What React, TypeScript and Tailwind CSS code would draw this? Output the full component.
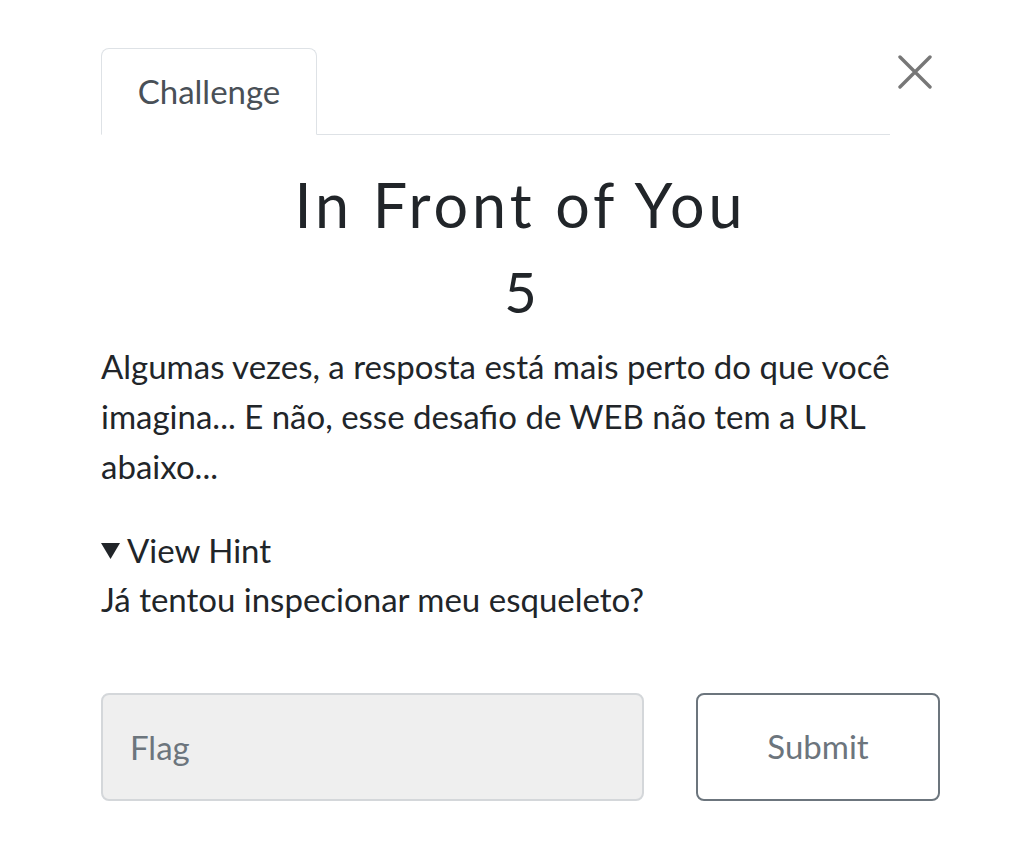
export default function App() {
  return (
    <div
      className="w-[1032px] h-[848px] bg-white text-[#212529] overflow-hidden"
      style={{ fontFamily: 'Lato, "Noto Sans", sans-serif' }}
    >
      <div className="pl-[101px] pr-[92px] pt-[48px]">
        {/* header: tabs + close */}
        <div className="flex items-start">
          <div className="flex-1 flex border-b border-[#dee2e6]">
            <div className="-mb-px h-[87px] w-[216px] flex items-center justify-center border border-[#dee2e6] border-b-white rounded-t-[8px] bg-white text-[33px] text-[#495057]">
              Challenge
            </div>
          </div>
          <button className="ml-[8px] mr-[8px] mt-[7px] w-[34px] h-[34px] flex items-center justify-center text-[#777]">
            <svg width="34" height="34" viewBox="0 0 34 34" fill="none" stroke="currentColor" strokeWidth="3.4" strokeLinecap="round">
              <path d="M2 2L32 32M32 2L2 32" />
            </svg>
          </button>
        </div>

        {/* title */}
        <div className="text-center mt-[34px]">
          <h2 className="text-[61px] leading-[72px] tracking-[4px]">In Front of You</h2>
          <h3 className="text-[56px] leading-[80px] mt-[11px]">5</h3>
        </div>

        <p className="mt-[9px] text-[33px] leading-[50px]">
          Algumas vezes, a resposta está mais perto do que você imagina... E não, esse desafio de WEB não tem a URL abaixo...
        </p>

        <div className="mt-[35px] text-[33px] leading-[49px]">
          <div className="flex items-center">
            <svg width="19" height="16" viewBox="0 0 19 16" className="mr-[7px]">
              <path d="M0 0H19L9.5 16Z" fill="currentColor" />
            </svg>
            <span>View Hint</span>
          </div>
          <div>Já tentou inspecionar meu esqueleto?</div>
        </div>

        <div className="mt-[69px] flex gap-[52px]">
          <input
            placeholder="Flag"
            className="w-[543px] h-[108px] rounded-[8px] border-2 border-[#d4d7da] bg-[#efefef] px-[27px] text-[33px] placeholder:text-[#6c757d] outline-none"
          />
          <button className="flex-1 h-[108px] rounded-[8px] border-2 border-[#6c757d] bg-white text-[33px] text-[#6c757d]">
            Submit
          </button>
        </div>
      </div>
    </div>
  )
}
